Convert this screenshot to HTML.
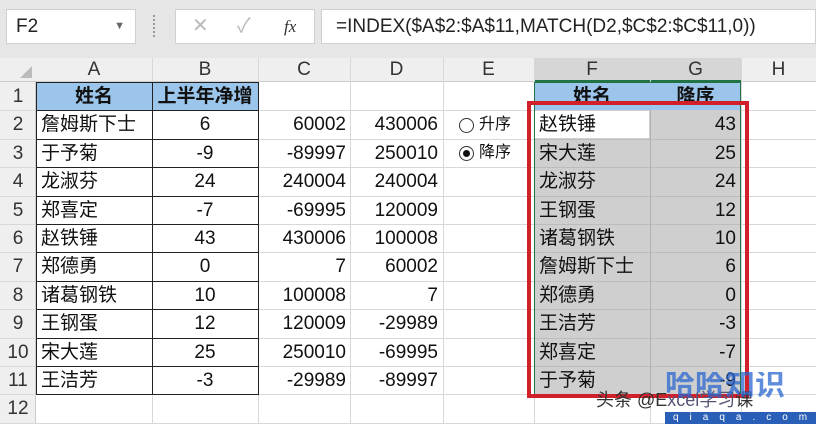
<!DOCTYPE html><html><head><meta charset="utf-8"><style>
body{margin:0;width:816px;height:424px;overflow:hidden;background:#fff;font-family:"Liberation Sans","Noto Sans CJK SC",sans-serif;position:relative}
.a{position:absolute;box-sizing:border-box}
.c{position:absolute;box-sizing:border-box;font-size:19px;line-height:28px;white-space:nowrap;overflow:hidden;color:#111}
</style></head><body>
<div class="a" style="left:0;top:0;width:816px;height:58px;background:#e6e6e6"></div>
<div class="a" style="left:6px;top:9px;width:130px;height:35px;background:#fff;border:1px solid #d0d0d0;font-size:19px;line-height:33px;padding-left:9px;color:#222">F2<span style="position:absolute;right:10px;top:0;font-size:11px;color:#666">▼</span></div>
<div class="a" style="left:153px;top:15px;width:3px;height:22px;border-left:2px dotted #999"></div>
<div class="a" style="left:175px;top:9px;width:140px;height:35px;background:#fff;border:1px solid #d0d0d0;font-size:20px;line-height:33px;color:#bbb"><span style="position:absolute;left:16px">✕</span><span style="position:absolute;left:61px">✓</span><span style="position:absolute;left:108px;color:#333;font-family:'Liberation Serif';font-style:italic;font-size:17px">fx</span></div>
<div class="a" style="left:321px;top:9px;width:495px;height:35px;background:#fff;border:1px solid #d0d0d0;font-size:19px;line-height:33px;padding-left:14px;color:#222">=INDEX($A$2:$A$11,MATCH(D2,$C$2:$C$11,0))</div>
<div class="a" style="left:0;top:58px;width:816px;height:24px;background:#efefef;border-bottom:1px solid #ccc"></div>
<div class="a" style="left:0;top:82px;width:36px;height:342px;background:#efefef;border-right:1px solid #ccc"></div>
<div class="a" style="left:534px;top:58px;width:207px;height:24px;background:#d6d6d6;border-bottom:2px solid #217346"></div>
<div class="a" style="left:20px;top:66px;width:0;height:0;border-left:12px solid transparent;border-bottom:12px solid #bbb"></div>
<div id="g"></div>
<script>
var X=[36,152,258,350,443,534,650,741,816],L="ABCDEFGH",h='';
for(var i=0;i<8;i++){h+='<div class="c" style="left:'+X[i]+'px;top:56px;width:'+(X[i+1]-X[i])+'px;text-align:center;color:#333">'+L[i]+'</div>';
h+='<div class="a" style="left:'+X[i+1]+'px;top:58px;width:1px;height:366px;background:#d8d8d8"></div>';}
function T(r){return 82+r*28.4}
for(var r=0;r<12;r++){h+='<div class="c" style="left:0;top:'+(T(r)+1)+'px;width:36px;text-align:center;color:#333">'+(r+1)+'</div>';
h+='<div class="a" style="left:0;top:'+T(r+1)+'px;width:816px;height:1px;background:#d8d8d8"></div>';}
h+='<div class="a" style="left:534px;top:'+T(1)+'px;width:207px;height:'+(T(11)-T(1))+'px;background:#cfcfcf"></div>';
h+='<div class="a" style="left:535px;top:'+(T(1)+1)+'px;width:114px;height:27px;background:#fff"></div>';
for(var r=1;r<11;r++)h+='<div class="a" style="left:534px;top:'+T(r+1)+'px;width:207px;height:1px;background:#bdbdbd"></div>';
h+='<div class="a" style="left:650px;top:'+T(1)+'px;width:1px;height:'+(T(11)-T(1))+'px;background:#b0b0b0"></div>';
h+='<div class="a" style="left:36px;top:82px;width:222px;height:28px;background:#9bc5ea"></div>';
h+='<div class="a" style="left:534px;top:82px;width:207px;height:28px;background:#9bc5ea"></div>';
var A=["姓名","詹姆斯下士","于予菊","龙淑芬","郑喜定","赵铁锤","郑德勇","诸葛钢铁","王钢蛋","宋大莲","王洁芳"],
B=["上半年净增","6","-9","24","-7","43","0","10","12","25","-3"],
C=["","60002","-89997","240004","-69995","430006","7","100008","120009","250010","-29989"],
D=["","430006","250010","240004","120009","100008","60002","7","-29989","-69995","-89997"],
F=["姓名","赵铁锤","宋大莲","龙淑芬","王钢蛋","诸葛钢铁","詹姆斯下士","郑德勇","王洁芳","郑喜定","于予菊"],
G=["降序","43","25","24","12","10","6","0","-3","-7","-9"];
for(var r=0;r<11;r++){var t=T(r)+1,b=r==0?'font-weight:bold;':'';
h+='<div class="c" style="left:36px;top:'+t+'px;width:116px;'+(r==0?'text-align:center;':'padding-left:5px;')+b+'">'+A[r]+'</div>';
h+='<div class="c" style="left:152px;top:'+t+'px;width:106px;text-align:center;'+b+'">'+B[r]+'</div>';
h+='<div class="c" style="left:258px;top:'+t+'px;width:92px;text-align:right;padding-right:4px">'+C[r]+'</div>';
h+='<div class="c" style="left:350px;top:'+t+'px;width:93px;text-align:right;padding-right:5px">'+D[r]+'</div>';
h+='<div class="c" style="left:534px;top:'+t+'px;width:116px;'+(r==0?'text-align:center;':'padding-left:5px;')+b+'">'+F[r]+'</div>';
h+='<div class="c" style="left:650px;top:'+t+'px;width:91px;'+(r==0?'text-align:center;':'text-align:right;padding-right:5px;')+b+'">'+G[r]+'</div>';}
for(var r=0;r<=11;r++)h+='<div class="a" style="left:36px;top:'+T(r)+'px;width:223px;height:1px;background:#222"></div>';
for(var x of [36,152,258])h+='<div class="a" style="left:'+x+'px;top:82px;width:1px;height:'+(T(11)-82)+'px;background:#222"></div>';
h+='<div class="a" style="left:534px;top:82px;width:207px;height:'+(T(11)-82+1)+'px;border:1px solid #217346"></div>';
h+='<div class="a" style="left:527px;top:101px;width:222px;height:297px;border:4px solid #d0202a"></div>';
document.getElementById("g").innerHTML=h;
</script>
<div class="a" style="left:459px;top:118px;width:15px;height:15px;border:1px solid #333;border-radius:50%"></div>
<div class="c" style="left:479px;top:111px;font-size:16px">升序</div>
<div class="a" style="left:459px;top:146px;width:15px;height:15px;border:1px solid #333;border-radius:50%"><div class="a" style="left:3px;top:3px;width:7px;height:7px;background:#111;border-radius:50%"></div></div>
<div class="c" style="left:479px;top:139px;font-size:16px">降序</div>
<div class="c" style="left:596px;top:386px;font-size:18px;color:#333">头条 @E<span style="color:#557">xcel学习</span>课</div>
<div class="c" style="left:665px;top:372px;font-size:30px;color:#2a66d0;opacity:.75;font-weight:bold">哈哈知识</div>
<div class="a" style="left:665px;top:412px;width:151px;height:12px;background:#2a5fb8;color:#fff;font-size:10px;line-height:12px;letter-spacing:11px;padding-left:8px">qiaqa.com</div>
</body></html>
